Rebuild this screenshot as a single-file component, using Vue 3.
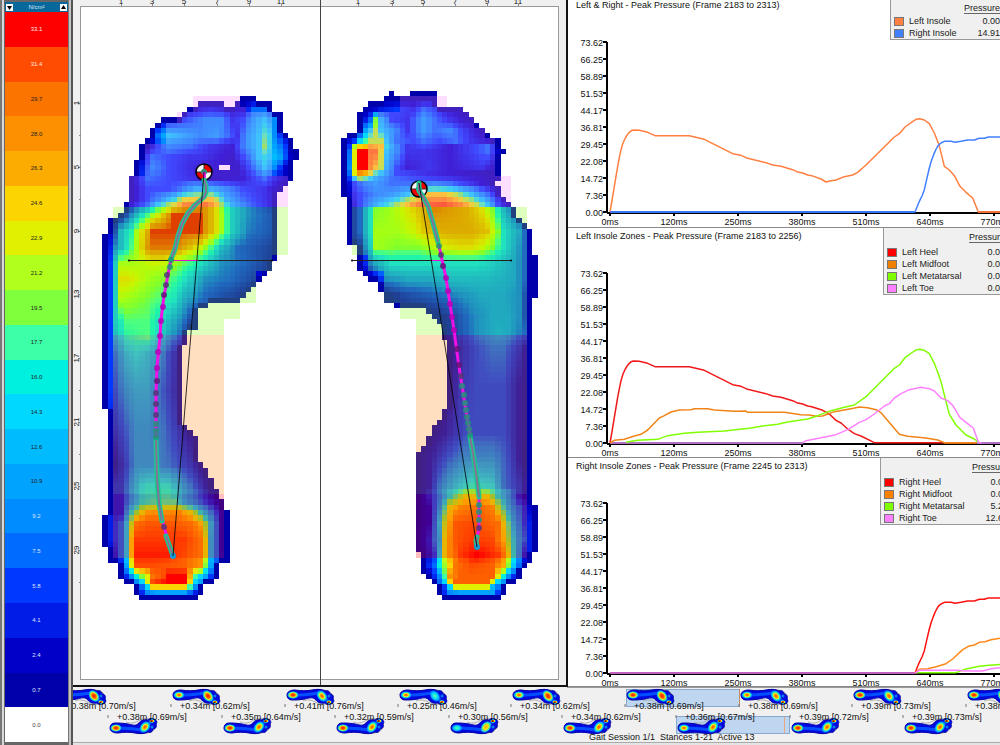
<script setup>
const scale = [
  ['33.1', '#ff0000'], ['31.4', '#ff4c00'], ['29.7', '#fc7400'], ['28.0', '#fc9000'],
  ['26.3', '#fcac00'], ['24.6', '#fcd400'], ['22.9', '#e0f000'], ['21.2', '#b0ff1c'],
  ['19.5', '#80ff3c'], ['17.7', '#3cffa8'], ['16.0', '#00f0e0'], ['14.3', '#00d8ff'],
  ['12.6', '#00bcff'], ['10.9', '#00a4ff'], ['9.2', '#008cff'], ['7.5', '#006cff'],
  ['5.8', '#0038ff'], ['4.1', '#001ce6'], ['2.4', '#0000c8'], ['0.7', '#0000aa'],
  ['0.0', '#ffffff'],
].map(([label, color], i) => ({
  label,
  color,
  ink: i < 2 ? '#ffe8e0' : i < 14 ? '#222' : i < 20 ? '#dfe6ff' : '#444',
}))

// Palette ordered from the lowest loaded level (1) to the highest (20).
const palette = scale.slice(0, 20).reverse().map(({ color }) =>
  [1, 3, 5].map((k) => parseInt(color.slice(k, k + 2), 16)))

const zoneTints = { toe: [255, 128, 255], met: [128, 255, 0], mid: [255, 128, 0], heel: [255, 0, 0] }

function levelColor(v) {
  const p = Math.max(0, Math.min(19, v - 1))
  const i = Math.min(18, Math.floor(p))
  return palette[i].map((c, k) => c + (palette[i + 1][k] - c) * (p - i))
}

function sampleStops(stops, col) {
  if (col <= stops[0][0]) return stops[0][1]
  for (let i = 1; i < stops.length; i++) {
    if (col <= stops[i][0]) {
      const [c0, v0] = stops[i - 1]
      const [c1, v1] = stops[i]
      return v0 + ((v1 - v0) * (col - c0)) / (c1 - c0)
    }
  }
  return stops[stops.length - 1][1]
}

function parseKeys(text) {
  return text.trim().split('\n').map((line) => {
    const [row, rest] = line.trim().split('|')
    return { row: +row, stops: rest.trim().split(' ').map((s) => s.split(':').map(Number)) }
  })
}

// "row|a-b" spans hold until the next listed row.
function parseSpans(text) {
  const out = []
  const items = text.trim().split(/\s+/).map((s) => {
    const [r, span] = s.split('|')
    return { r: +r, ranges: span.split(',').map((x) => x.split('-').map(Number)) }
  })
  items.forEach((it, i) => {
    const end = i + 1 < items.length ? items[i + 1].r : it.r + 1
    for (let r = it.r; r < end; r++) out[r] = it.ranges
  })
  return out
}

const CELL = 5.308

function buildFoot({ x0, y0, shape, zones, bands, keys, holes }) {
  const mask = parseSpans(shape)
  const zone = parseSpans(zones)
  const frames = parseKeys(keys)
  const inside = (r, c) => !!mask[r] && mask[r].some(([a, b]) => c >= a && c < b) &&
    !(holes || []).some(([hr, a, b]) => hr === r && c >= a && c < b)
  const cells = []
  const rows = Math.max(mask.length, zone.length)
  for (let r = 0; r < rows; r++) {
    const band = bands.find((b) => r < b[0])
    let run = null
    for (let c = 0; c < 38; c++) {
      const tinted = band && zone[r] && zone[r].some(([a, b]) => c >= a && c < b)
      const on = inside(r, c)
      let fill = null
      if (on || tinted) {
        let rgb = [255, 255, 255]
        if (on) {
          let v = 1
          const edge = !(inside(r, c - 1) && inside(r, c + 1) && inside(r - 1, c) && inside(r + 1, c))
          if (!edge || (holes || []).some((h) => Math.abs(h[0] - r) < 2 && c >= h[1] - 1 && c <= h[2])) {
            let k = frames.findIndex((f) => f.row >= r)
            if (k < 0) k = frames.length - 1
            const b = frames[k]
            const a = k > 0 && b.row !== r ? frames[k - 1] : b
            const t = a === b ? 0 : (r - a.row) / (b.row - a.row)
            v = sampleStops(a.stops, c) * (1 - t) + sampleStops(b.stops, c) * t
          }
          rgb = levelColor(v)
        }
        if (tinted) rgb = rgb.map((n, k) => n * 0.75 + zoneTints[band[1]][k] * 0.25)
        fill = `rgb(${rgb.map((n) => Math.round(n)).join(',')})`
      }
      if (run && run.fill === fill) { run.c1 = c + 1; continue }
      if (run && run.fill) cells.push(run)
      run = { r, c0: c, c1: c + 1, fill }
    }
    if (run && run.fill) cells.push(run)
  }
  return cells.map(({ r, c0, c1, fill }) => {
    const x = Math.round(x0 + c0 * CELL)
    const y = Math.round(y0 + r * CELL)
    return {
      x, y, fill,
      w: Math.round(x0 + c1 * CELL) - x,
      h: Math.round(y0 + (r + 1) * CELL) - y,
    }
  })
}

const leftCells = buildFoot({
  x0: 102.3, y0: 96,
  shape: `0|26-29 1|18-23,25-32 2|16-32 3|15-34 4|11-34 5|10-34 6|9-34 7|9-35 8|8-36 9|7-36 10|7-37 12|6-36 15|5-36
    16|5-35 17|5-34 18|5-33 20|4-33 22|3-33 23|1-33 26|0-33 31|0-32 33|0-31 34|0-30 35|0-29 36|0-28 37|0-27 38|0-26
    39|0-20 40|0-18 44|0-16 47|0-15 59|1-15 62|1-16 63|1-17 64|1-18 69|1-19 70|1-20 72|1-21 74|1-22 76|1-23 78|1-24
    79|0-24 85|1-24 88|3-22 91|4-21 92|6-19 94|7-18`,
  zones: `0|17-26 2|17-27 3|14-32 5|12-32 9|8-32 15|5-35 21|2-35 30|2-32 33|2-29 39|2-26 42|2-23 86|2-23`,
  bands: [[21, 'toe'], [45, 'met'], [75, 'mid'], [87, 'heel']],
  holes: [[13, 22, 24]],
  keys: `
    0|0:1 36:1
    2|16:2 18:2.5 20:3 24:2 26:2 28:5 30:5 32:2
    4|11:2 13:3 15:4 19:6 22:6 24:3 26:4 28:7 30:9 32:6 33:3
    7|9:2 10:5 12:9 14:8 18:6 21:7 23:5 25:3 27:7 29:9 30:11 31:10 32:6 34:2
    9|8:1 10:4 12:6 16:5 20:3 24:2 27:7 29:9 30:12 31:10 32:7 34:4 35:1
    11|7:2 9:5 12:4 16:3 18:3 24:1.5 27:5 29:9 30:10 31:9 33:7 35:2
    13|7:3 9:6 12:4 15:3 18:2 25:1.5 28:5 30:9 32:6 34:2
    15|5:1 8:5 12:4 16:3 20:1.5 26:2 30:5 32:3 35:1
    17|5:1 8:4 12:4 14:5 17:8 20:8 23:6 26:4 30:3 33:1
    19|5:1 8:4 10:6 13:10 15:14 18:15 20:15 21:13 23:8 26:5 32:2
    20|4:1 8:5 10:9 12:12 15:17 19:18 21:15 22:12 24:8 27:5 32:2
    22|3:1 5:5 7:9 9:13 11:16 13:20 18:20 19:18 21:15 22:13 24:8 27:5 32:3
    25|0:1 2:3 3:7 5:10 6:13 8:17 9:20 18:20 19:18 21:15 22:13 24:8 27:4.5 32:3
    28|0:1 1:3 2:5 4:9 6:13 8:18 9:19 13:19 16:16 18:14 20:11 22:7 25:4 32:2
    31|0:1 1:4 2:8 3:13 5:13 9:14 11:14 14:12 17:10 19:8 22:5 26:4 31:2
    34|0:1 1:4 2:8 3:15 4:15 6:14 8:13 11:12 14:10 17:7 19:5 24:4 29:2
    38|0:1 1:4 2:8 3:13 7:12 10:11 13:9 15:6 18:4 22:2.5 27:1
    42|0:1 1:4 2:8 4:11 8:11 10:9 13:6 15:4 17:1
    45|0:1 1:4 2:7 4:10 8:11 10:9 12:6 14:4 15:2
    48|0:1 1:4 2:5 4:8 6:9 8:8 10:6.5 12:4 14:2
    55|0:1 1:4 2:4 4:6 6:7 8:7 10:5 12:3.5 14:2
    62|0:1 1:3 2:3 4:4.5 6:6 8:6 11:5 13:3.5 15:2 17:1
    69|0:1 1:3 2:1.5 4:3.5 6:6 9:6 12:5 14:4 16:3 18:1.5
    73|1:3 3:3 5:6 7:9 8:9.5 12:9.5 14:7 16:5 18:3 20:1
    76|1:3 3:3 5:7 7:10 10:11 13:11 15:8 17:6 19:4 22:1
    78|1:3 3:3 5:10 7:14 8:15.5 14:16 16:14 18:10 20:6 22:2
    80|0:1 1:3 3:5 4:9 5:13 6:17 8:18 13:18 16:17 18:15 19:12 21:5 22:2
    83|0:1 1:3 3:5 4:9 5:15 6:19 15:19 18:17 19:14 20:8 22:2
    86|0:1 2:3 3:5 4:9 5:15 6:19.5 12:19.5 15:18.5 18:17 19:14 20:8 22:2
    88|3:2 4:7 5:14 6:19 9:19 15:18.5 18:17 19:12 20:7 22:2
    90|3:1 5:6 6:10 7:12 8:14 9:18 11:19 12:20 15:20 16:16 17:11 19:7 21:1
    91|4:1 5:3 7:9 8:14 9:19 12:20 15:20 16:15 17:9 18:7 20:1
    92|6:1 7:5 8:9 9:15 15:15 16:11 17:6 18:1
    93|6:1 8:6 10:7 15:7 17:3 18:1
    94|0:1 36:1`,
})

const rightCells = buildFoot({
  x0: 341.3, y0: 90.7,
  shape: `0|9-10,13-18 1|8-18 2|5-18 3|4-23 4|3-24 5|3-25 6|3-26 7|3-27 8|1-28 9|0-30 11|0-31 12|0-30 17|0-29 18|0-30
    20|1-31 21|1-32 22|1-33 24|1-34 25|1-35 26|1-36 29|3-36 31|3-37 34|4-37 35|5-37 36|7-37 38|8-37 39|8-36 40|10-36
    41|16-36 42|17-36 43|18-36 44|19-36 47|20-36 60|19-36 62|18-36 63|17-36 65|16-36 67|15-36 68|14-36 78|14-37
    87|15-36 89|15-35 90|15-34 91|16-34 92|17-33 93|18-31 95|19-30`,
  zones: `1|11-20 3|11-23 4|7-24 5|7-25 7|5-27 9|5-29 16|2-32 22|2-35 31|5-35 34|8-35 40|11-35 43|14-35 87|14-35`,
  bands: [[22, 'toe'], [46, 'met'], [76, 'mid'], [88, 'heel']],
  keys: `
    1|8:1 17:1
    3|4:1 7:3 10:4 13:3 15:5 17:4 19:2 22:1
    5|3:1 5:5 6:12 7:8 9:4 12:3 15:7 17:5 20:3 24:1
    7|3:1 4:7 5:9 6:13 7:9 9:7 12:3 15:7 17:5 20:6 22:4 26:1
    9|0:1 2:4 3:9 5:13 7:13 8:9 10:5 13:4 15:5 18:4 21:5 24:3 27:2 29:1
    10|0:1 1:4 2:13 3:15 5:16 7:15 8:10 10:6 12:3 15:4 20:2 25:4 27:5 29:2
    11|0:1 1:5 2:14 3:20 4:20 5:18 6:18 7:14 8:9 10:6 12:3 15:3 20:2 25:4 27:5 29:2
    14|0:1 1:6 2:14 3:20 4:20 5:17 6:15 7:13 8:8 10:4 12:2 16:3 20:2 26:3 29:1
    15|0:1 1:5 2:14 3:17 4:16 5:14 6:11 7:9 10:4 14:3 20:2 29:1
    16|0:1 1:4 2:9 3:12 4:11 6:8 9:5 14:4 20:3 29:1
    17|0:1 2:4 4:6 6:7 9:5 14:5 17:6 20:5 24:3 28:1
    19|0:1 3:4 6:6 9:7 12:9 14:13 16:15 19:15 21:13 24:9 27:5 30:1
    21|1:1 3:4 6:8 9:11 12:15 15:18.5 19:19 22:17 25:13 27:9 29:4 31:1
    22|1:1 3:4 5:9 6:12 9:13 11:14 14:16 17:18.5 19:18 23:17 26:15 28:12 30:7 33:2
    26|1:1 3:4 5:9 6:13 10:13 13:14 16:16.5 20:17 24:17 27:16 29:12 30:9 33:6 35:2
    29|3:2 5:8 6:13 10:12 14:12 18:14 22:15 24:15 26:14 28:12 30:9 34:4 35:1
    32|3:2 6:6 9:9 13:9 20:9 25:9 28:8 32:6 34:4 35:1
    35|5:1 8:5 12:6 16:6 20:7 27:7 32:6 34:4 35:1
    38|8:1 11:2.5 16:3.5 20:4.5 26:6 30:6 33:5 35:1
    42|17:1 20:2 24:4.5 28:6 31:6 33:5 35:1
    45|18:1 21:2.5 25:5 29:6.5 31:6 34:4 35:1
    48|19:1 22:2.5 25:4 28:5 30:5 33:3 35:1
    55|19:1 22:3 25:4 30:4 33:2 35:1
    64|16:1 19:2 23:4 30:4 33:2 35:1
    69|14:1 17:2.5 20:4.5 23:6 28:6 31:4 34:1
    74|14:1 16:2 18:5 21:8 24:10 28:9 30:5 33:3 35:1
    76|14:1 16:3 18:6 20:10 23:14 27:14 29:10 31:7 33:3 35:1
    78|14:1 16:2 18:7 20:14 22:16 26:17 28:16 29:13 31:8 33:5 35:2
    81|14:1 16:2 17:5 19:13 21:18 24:18.5 29:17 30:14 32:8 34:4 36:2
    84|14:1 16:3 18:8 19:14 21:18 24:19 28:18.5 30:15 31:12 33:7 35:3 36:1
    87|15:1 17:4 18:9 19:14 20:16 22:19 25:20 29:19 30:17 31:14 32:10 34:3
    89|15:2 17:5 18:10 20:15 21:18 24:19 28:18.5 30:16 31:12 33:5 34:2
    91|16:1 18:6 19:11 20:17 22:18.5 28:18.5 29:14 30:10 31:6 33:1
    92|17:1 18:5 19:9 20:15 21:18.5 27:18.5 28:14 29:9 31:4 32:1
    93|18:1 19:4 20:9 21:14 27:14 28:8 30:3
    94|18:1 20:6 22:7 28:7 30:1
    95|0:1 36:1`,
})

const tracks = [
  {
    path: '204,172 205,184 206,190 204,197 195,205 188,213 182,224 178,236 175,249 170,264 164,296 161,320 160,336 157,368 156,393 156,415 156,443 157,477 159,503 164,527 173,556',
    dense: ['204,180 206,186 206,192 204,197 195,205 188,213 182,224 178,236 175,249 171,259', '156,440 157,477 159,503 162,521', '166,536 173,556'],
    dots: [[171, 260, 0], [170, 267, 0], [167, 275, 1], [166, 285, 1], [164, 295, 2], [163, 307, 3], [161, 321, 3], [160, 336, 3], [158, 352, 3], [157, 368, 3], [157, 381, 2], [156, 393, 1], [156, 404, 1], [156, 415, 1], [156, 424, 0], [156, 431, 0], [156, 437, 0], [164, 527, 1]],
    chord: [204, 172, 173, 556],
    ball: [204, 172],
    axis: [129, 272],
    gap: [171, 198],
    end: [173, 556],
  },
  {
    path: '419,183 419,192 428,206 433,223 439,246 441,255 446,278 450,304 454,330 458,360 463,392 467,417 473,453 477,480 479,497 479,513 479,528 477,538 477,547',
    dense: ['419,183 419,191 422,195 428,206 433,223 438,242', '470,437 473,453 477,480 479,497', '477,537 476,541 477,547'],
    dots: [[439, 246, 0], [441, 255, 1], [443, 266, 2], [446, 278, 3], [448, 291, 3], [450, 304, 3], [452, 317, 3], [454, 330, 3], [457, 349, 2], [459, 365, 2], [461, 376, 1], [462, 386, 0], [464, 395, 0], [465, 403, 0], [466, 410, 0], [467, 417, 0], [468, 423, 0], [469, 429, 0], [470, 435, 0], [479, 505, 0], [479, 512, 0], [479, 520, 0], [479, 528, 1]],
    chord: [419, 183, 477, 547],
    ball: [419, 189],
    axis: [352, 511],
    gap: [432, 443],
    end: [477, 547],
  },
]
const dotInk = ['#159a72', '#4a3a70', '#5a1470', '#b000b4']

const topTicks = [[121, '1'], [152, '3'], [184, '5'], [217, '7'], [249, '9'], [281, '11'],
  [358, '1'], [392, '3'], [423, '5'], [455, '7'], [487, '9'], [518, '11']]
const sideTicks = [[103, '1'], [167, '5'], [231, '9'], [294, '13'], [358, '17'], [422, '21'], [486, '25'], [550, '29']]

// Traces are stored in thirds of a plot pixel: time across, pressure up.
const leftRise = '0,0 6,34 13,77 18,107 23,137 28,163 33,187 39,207 46,222 52,232 58,239 64,244 70,246 88,245 113,239 135,229 238,229 283,218 368,175 393,170 413,161 468,148 488,141 513,137 548,127 560,121 578,117 593,111 605,109'
const rightHeel = '0,0 915,0 928,32 936,48 943,67 950,98 958,132 964,153 971,172 977,186 983,197 988,203 993,207 1003,212 1023,212 1035,209 1053,212 1073,216 1093,216 1108,221 1123,221 1135,225 1180,225'
const charts = [
  {
    title: 'Left & Right - Peak Pressure (Frame 2183 to 2313)',
    base: 212, titleY: 8, cls: 'first',
    items: [['Left Insole', '#ff8040', '0.00'], ['Right Insole', '#4080ff', '14.91']],
    lines: [
      ['#ff7f40', leftRise + ' 633,99 648,90 663,94 678,96 703,106 728,111 743,119 768,141 853,225 868,235 885,255 913,275 921,279 929,280 943,276 958,265 973,237 987,202 1003,137 1018,126 1033,109 1050,77 1068,59 1088,42 1105,0 1180,0'],
      ['#4080ff', rightHeel],
    ],
    zero: [['#1f5fd0', 0, 912], ['#b84a18', 1105, 1180]],
  },
  {
    title: 'Left Insole Zones - Peak Pressure (Frame 2183 to 2256)',
    base: 215, titleY: 11, cls: 'second',
    items: [['Left Heel', '#ff0000', '0.00'], ['Left Midfoot', '#f08000', '0.00'], ['Left Metatarsal', '#80ff00', '0.00'], ['Left Toe', '#ff80ff', '0.00']],
    lines: [
      ['#f01818', leftRise + ' 638,98 658,87 678,68 693,60 713,42 733,28 753,21 793,1 1000,1'],
      ['#f08418', '0,0 13,8 43,11 73,21 93,26 113,39 148,75 163,82 183,93 208,99 243,100 253,103 293,103 313,99 373,95 408,96 413,92 523,92 573,85 598,84 618,80 638,81 673,94 723,103 748,108 773,106 798,100 813,91 868,26 893,20 948,15 983,9 1003,1 1100,1'],
      ['#80ff00', '48,2 83,8 143,11 173,22 223,29 263,32 343,36 423,45 463,52 503,56 533,63 593,72 623,82 663,97 703,107 733,114 768,139 853,224 868,234 885,256 913,276 921,280 929,281 943,278 958,268 973,239 984,210 993,184 1005,136 1018,86 1038,54 1068,24 1093,12 1108,0'],
      ['#ff80ff', '578,1 588,7 633,16 678,25 713,40 748,62 768,70 793,87 823,111 838,118 853,135 873,148 898,160 933,167 958,163 973,156 993,135 1013,127 1028,113 1050,76 1068,62 1090,45 1105,2 1115,0'],
    ],
    zero: [['#b070c8', 0, 580], ['#c86018', 1000, 1100], ['#b070c8', 1100, 1180]],
  },
  {
    title: 'Right Insole Zones - Peak Pressure (Frame 2245 to 2313)',
    base: 215, titleY: 11, cls: 'third',
    items: [['Right Heel', '#ff0000', '0.00'], ['Right Midfoot', '#ff8000', '0.00'], ['Right Metatarsal', '#80ff00', '5.21'], ['Right Toe', '#ff80ff', '12.65']],
    lines: [
      ['#ff1010', rightHeel.replace('0,0 915,0', '915,0')],
      ['#ff8818', '915,0 928,11 953,13 978,19 1008,28 1028,42 1058,70 1075,80 1093,84 1108,92 1125,94 1143,100 1180,106'],
      ['#80ff00', '915,1 1038,1 1068,12 1108,20 1138,23 1180,26'],
      ['#ff80ff', '915,0 928,8 1043,8 1063,6 1118,6 1143,13 1180,17'],
    ],
    zero: [['#c060c0', 0, 915]],
  },
]
const yLabels = ['73.62', '66.25', '58.89', '51.53', '44.17', '36.81', '29.45', '22.08', '14.72', '7.36', '0.00']
const xLabels = ['0ms', '120ms', '250ms', '380ms', '510ms', '640ms', '770ms']

const steps = [
  { x: 58, row: 0, t: '+0.38m [0.70m/s]', heel: 'cool', fore: 'hot' },
  { x: 172, row: 0, t: '+0.34m [0.62m/s]', heel: 'warm', fore: 'hot' },
  { x: 286, row: 0, t: '+0.41m [0.76m/s]', heel: 'hot', fore: 'warm' },
  { x: 399, row: 0, t: '+0.25m [0.46m/s]', heel: 'warm', fore: 'cool' },
  { x: 512, row: 0, t: '+0.34m [0.62m/s]', heel: 'warm', fore: 'hot' },
  { x: 626, row: 0, t: '+0.38m [0.69m/s]', heel: 'hot', fore: 'hot' },
  { x: 740, row: 0, t: '+0.38m [0.69m/s]', heel: 'warm', fore: 'warm' },
  { x: 853, row: 0, t: '+0.39m [0.73m/s]', heel: 'hot', fore: 'warm' },
  { x: 967, row: 0, t: '+0.38m [0.71m/s]', heel: 'hot', fore: 'hot' },
  { x: 109, row: 1, t: '+0.38m [0.69m/s]', heel: 'hot', fore: 'warm' },
  { x: 223, row: 1, t: '+0.35m [0.64m/s]', heel: 'hot', fore: 'warm' },
  { x: 336, row: 1, t: '+0.32m [0.59m/s]', heel: 'hot', fore: 'warm' },
  { x: 450, row: 1, t: '+0.30m [0.56m/s]', heel: 'cool', fore: 'amber' },
  { x: 563, row: 1, t: '+0.34m [0.62m/s]', heel: 'hot', fore: 'warm' },
  { x: 677, row: 1, t: '+0.36m [0.67m/s]', heel: 'warm', fore: 'warm' },
  { x: 791, row: 1, t: '+0.39m [0.72m/s]', heel: 'hot', fore: 'warm' },
  { x: 904, row: 1, t: '+0.39m [0.73m/s]', heel: 'hot', fore: 'warm' },
]
</script>

<template>
  <div class="app">
    <aside class="scale">
      <div class="scale-head">
        <button type="button" aria-label="Lower range"><svg viewBox="0 0 7 7"><path d="M1 2h5L3.500 6z" /></svg></button>
        <span>N/cm²</span>
        <button type="button" aria-label="Raise range"><svg viewBox="0 0 7 7"><path d="M1 5h5L3.500 1z" /></svg></button>
      </div>
      <ul class="scale-list">
        <li v-for="s in scale" :key="s.label" :style="{ background: s.color, color: s.ink }">{{ s.label }}</li>
      </ul>
    </aside>

    <main class="feet">
      <svg viewBox="73 0 493 685" preserveAspectRatio="xMinYMin meet" role="img" aria-label="Peak pressure map of both feet">
        <rect x="73" y="0" width="494" height="687" fill="#f0f0f0" />
        <rect x="80.500" y="6.500" width="478" height="673" fill="#fff" stroke="#999" />
        <g stroke="#888" shape-rendering="crispEdges">
          <line v-for="t in topTicks" :key="'t' + t[0]" :x1="t[0]" :x2="t[0]" y1="4" y2="6" />
          <line v-for="t in sideTicks" :key="'s' + t[0]" x1="78" x2="81" :y1="t[0]" :y2="t[0]" />
          <line v-for="t in sideTicks" :key="'m' + t[0]" x1="79" x2="81" :y1="t[0] + 32" :y2="t[0] + 32" />
        </g>
        <g class="ruler">
          <text v-for="t in topTicks" :key="t[0]" :x="t[0]" y="4" text-anchor="middle">{{ t[1] }}</text>
          <text v-for="t in sideTicks" :key="t[0]" x="0" y="0" text-anchor="middle" :transform="`translate(79 ${t[0]}) rotate(-90)`">{{ t[1] }}</text>
        </g>

        <g shape-rendering="crispEdges">
          <rect v-for="(c, i) in leftCells" :key="'l' + i" :x="c.x" :y="c.y" :width="c.w" :height="c.h" :fill="c.fill" />
          <rect v-for="(c, i) in rightCells" :key="'r' + i" :x="c.x" :y="c.y" :width="c.w" :height="c.h" :fill="c.fill" />
        </g>

        <g v-for="(k, i) in tracks" :key="i" fill="none">
          <g :transform="`translate(${k.ball[0]} ${k.ball[1]})`">
            <circle r="8" fill="#f4f4f4" />
            <path d="M0 0V-8A8 8 0 0 1 8 0ZM0 0V8A8 8 0 0 1-8 0Z" fill="#f00000" />
            <path d="M0-8V8M-8 0H8" stroke="#333" />
            <circle r="8" stroke="#000" stroke-width="1.500" />
            <circle r="3" fill="#2a9070" />
          </g>
          <line :x1="k.axis[0]" :x2="k.axis[1]" y1="260.500" y2="260.500" stroke="#222" />
          <circle :cx="k.axis[0]" cy="260.500" r="1" fill="#000" />
          <circle :cx="k.axis[1]" cy="260.500" r="1" fill="#000" />
          <line :x1="k.gap[0]" :x2="k.gap[1]" y1="260.500" y2="260.500" stroke="#e010d0" />
          <polyline :points="k.path" stroke="#f010e8" stroke-width="3" stroke-linejoin="round" />
          <polyline v-for="(d, j) in k.dense" :key="j" :points="d" stroke="#18c890" stroke-width="5" stroke-linecap="round" stroke-linejoin="round" />
          <polyline v-for="(d, j) in k.dense" :key="'c' + j" :points="d" stroke="#887098" stroke-width="2" />
          <circle v-for="(d, j) in k.dots" :key="'d' + j" :cx="d[0]" :cy="d[1]" r="3" :fill="dotInk[d[2]]" opacity="0.8" />
          <circle :cx="k.end[0]" :cy="k.end[1]" r="3" fill="#1898d0" />
          <line :x1="k.chord[0]" :y1="k.chord[1]" :x2="k.chord[2]" :y2="k.chord[3]" stroke="#000" stroke-opacity="0.8" />
        </g>
        <line x1="320.500" x2="320.500" y1="0" y2="687" stroke="#444" />
      </svg>
    </main>

    <div class="charts">
      <section v-for="c in charts" :key="c.title" class="chart" :class="c.cls">
        <svg viewBox="0 0 432 229" preserveAspectRatio="xMinYMin meet" role="img" :aria-label="c.title">
          <text x="8" :y="c.titleY">{{ c.title }}</text>
          <g :transform="`translate(42 ${c.base})`">
            <path d="M-3-170V0M-3 1H400" stroke="#000" stroke-width="2" fill="none" />
            <g stroke="#000" stroke-width="2">
              <line v-for="(l, i) in yLabels" :key="l" x1="-7" x2="-3" :y1="i * 17 - 170" :y2="i * 17 - 170" />
              <line v-for="(l, i) in xLabels" :key="l" y1="0" y2="4" :x1="i * 64" :x2="i * 64" />
            </g>
            <text v-for="(l, i) in yLabels" :key="l" x="-7" :y="i * 17 - 166" text-anchor="end">{{ l }}</text>
            <text v-for="(l, i) in xLabels" :key="l" :x="i * 64" y="13" text-anchor="middle">{{ l }}</text>
            <line v-for="z in c.zero" :key="z[0] + z[1]" :x1="z[1] / 3" :x2="z[2] / 3" y1="0" y2="0" :stroke="z[0]" stroke-width="2" />
            <g transform="scale(0.333333 -0.333333)">
              <polyline v-for="l in c.lines" :key="l[0]" :points="l[1]" :stroke="l[0]" class="trace" />
            </g>
          </g>
        </svg>
        <div class="legend">
          <table>
            <thead><tr><th class="key"></th><th></th><th class="value"><span>Pressure</span></th></tr></thead>
            <tbody>
              <tr v-for="it in c.items" :key="it[0]">
                <td class="key"><i :style="{ background: it[1] }"></i></td>
                <td>{{ it[0] }}</td>
                <td class="value">{{ it[2] }}</td>
              </tr>
            </tbody>
          </table>
        </div>
      </section>
    </div>

    <footer class="timeline">
      <svg viewBox="73 687 927 58" preserveAspectRatio="xMinYMin meet" role="img" aria-label="Gait session timeline">
        <defs>
          <radialGradient id="hot">
            <stop offset="0" stop-color="#ff1000" /><stop offset="0.35" stop-color="#ff6000" /><stop offset="0.55" stop-color="#f8e010" />
            <stop offset="0.7" stop-color="#30f0a0" /><stop offset="0.85" stop-color="#0090ff" /><stop offset="1" stop-color="#0030ff" stop-opacity="0" />
          </radialGradient>
          <radialGradient id="warm">
            <stop offset="0" stop-color="#ff5000" /><stop offset="0.25" stop-color="#ff9000" /><stop offset="0.45" stop-color="#e8f020" />
            <stop offset="0.6" stop-color="#20f0c0" /><stop offset="0.8" stop-color="#0090ff" /><stop offset="1" stop-color="#0030ff" stop-opacity="0" />
          </radialGradient>
          <radialGradient id="amber">
            <stop offset="0" stop-color="#ffb000" /><stop offset="0.4" stop-color="#f8e010" />
            <stop offset="0.7" stop-color="#20f0c0" /><stop offset="1" stop-color="#0070ff" stop-opacity="0" />
          </radialGradient>
          <radialGradient id="cool">
            <stop offset="0" stop-color="#60ffa0" /><stop offset="0.4" stop-color="#10e8f0" />
            <stop offset="0.7" stop-color="#00a0ff" /><stop offset="1" stop-color="#0040ff" stop-opacity="0" />
          </radialGradient>
        </defs>
        <rect x="73" y="687" width="927" height="58" fill="#f0f0f0" />
        <path d="M567 687.500H1000" stroke="#999" />
        <path d="M73 742.500H1000" stroke="#aaa" />
        <rect x="73" y="743" width="927" height="2" fill="#e4e4e4" />
        <rect x="626.500" y="689.500" width="113" height="17" fill="#bed6f0" stroke="#88a8d0" />
        <path d="M739.500 689V706" stroke="#c88860" />
        <rect x="676.500" y="716.500" width="113" height="17" fill="#bed6f0" stroke="#88a8d0" />
        <path d="M784.500 717V733" stroke="#e8a880" />
        <g v-for="s in steps" :key="s.x">
          <g :transform="s.row ? `translate(${s.x + 1} 734) scale(1 -1)` : `translate(${s.x + 1} 689)`">
            <path d="M16 12C20 10 25 11 28 13C33 16 38 16 42 15M30 1C38 0 44 2 46 7" fill="none" stroke="#aaa" />
            <path d="M0 6C0 3 3 1 8 1C14 2 20 2 25 1C29 0 35 0 38 2C40 1 43 2 43 5C46 5 47 8 46 10C48 12 46 15 43 15C41 16 39 15 38 14C33 15 30 13 28 10C25 8 22 9 18 10C12 11 9 11 5 11C2 11 0 9 0 6Z" fill="#0008e0" stroke="#0000a8" />
            <path d="M9 6C18 6 24 5 32 4L36 8L40 11" fill="none" stroke="#0050ff" stroke-width="3" stroke-linecap="round" stroke-linejoin="round" />
            <ellipse cx="6" cy="6" rx="6" ry="4" :fill="`url(#${s.heel})`" />
            <ellipse cx="35" cy="7" rx="7" ry="5" transform="rotate(50 35 7)" :fill="`url(#${s.fore})`" />
            <ellipse cx="42" cy="13" rx="3" ry="2" fill="url(#hot)" />
            <circle cx="42" cy="7" r="1.500" fill="#00a0f0" opacity="0.8" />
          </g>
          <line :x1="s.x - 1" :x2="s.x - 1" :y1="s.row ? 715 : 704" :y2="s.row ? 718 : 707" stroke="#777" />
          <text :x="s.x + 8" :y="s.row ? 720 : 709">{{ s.t }}</text>
        </g>
        <text x="589" y="740" class="session">Gait Session 1/1&nbsp; Stances 1-21&nbsp; Active 13</text>
      </svg>
    </footer>
  </div>
</template>

<style>
body { margin: 0; background: #f0f0f0; }
</style>

<style scoped>
.app {
  display: grid;
  grid-template-columns: 73px minmax(0, 495fr) minmax(0, 432fr);
  grid-template-rows: minmax(0, 1fr) 58px;
  height: 100vh;
  overflow: hidden;
  font-family: "Liberation Sans", Arial, sans-serif;
  font-size: 9px;
  color: #222;
}
svg { display: block; width: 100%; height: 100%; }
svg text { fill: #111; font-size: 9px; }

.scale {
  grid-row: 1 / 3;
  display: flex;
  flex-direction: column;
  box-sizing: border-box;
  padding: 2px 4px 3px 5px;
  background: linear-gradient(90deg, #777 0 2px, #d8d8d8 2px 4px, #666 4px 68px, #777 68px 69px, #c4c4c4 69px 71px, #555 71px 73px);
}
.scale-head {
  display: flex;
  align-items: center;
  justify-content: space-between;
  box-sizing: border-box;
  height: 10px;
  padding: 0 1px;
  margin-right: 1px;
  background: #08689c;
  color: #d8ecf8;
  font-size: 6px;
}
.scale-head button {
  width: 7px;
  height: 7px;
  padding: 0;
  border: 0;
  background: #fff;
}
.scale-list {
  flex: 1;
  display: flex;
  flex-direction: column;
  margin: 0 1px 0 0;
  padding: 0;
  list-style: none;
  font-size: 6px;
}
.scale-list li {
  flex: 1;
  display: flex;
  align-items: center;
  justify-content: center;
}

.feet {
  border-right: 2px solid #111;
  border-bottom: 2px solid #111;
  min-height: 0;
  overflow: hidden;
  background: #f0f0f0;
}
.ruler text { font-size: 8px; }

.charts {
  display: grid;
  grid-template-rows: 228fr 230fr 229fr;
  min-height: 0;
  background: #fff;
}
.chart {
  position: relative;
  min-height: 0;
  overflow: hidden;
  border-bottom: 1px solid #888;
  box-sizing: border-box;
}
.chart svg { overflow: visible; height: auto; }
.trace {
  fill: none;
  stroke-width: 1.5px;
  stroke-linejoin: round;
  vector-effect: non-scaling-stroke;
}
.legend {
  position: absolute;
  top: 0;
  right: 0;
  overflow: hidden;
  box-sizing: border-box;
  border-left: 1px solid #999;
  border-bottom: 1px solid #999;
  background: #f0f0f0;
}
.legend table {
  border-collapse: collapse;
  table-layout: fixed;
  white-space: nowrap;
}
.legend th, .legend td {
  height: 12px;
  padding: 0;
  line-height: 12px;
  font-weight: normal;
  text-align: left;
}
.legend th { height: 18px; vertical-align: middle; }
.legend th span { border-bottom: 1px solid #666; }
.legend .key { width: 18px; }
.legend .key i {
  display: block;
  width: 8px;
  height: 7px;
  margin-left: 3px;
  border: 1px solid #777;
}
.legend .value { width: 36px; text-align: right; }
.first .legend { width: 110px; }
.first .legend table { width: 109px; }
.first .legend th { height: 15px; }
.second .legend { width: 117px; }
.second .legend table { width: 121px; }
.third .legend { width: 120px; }
.third .legend table { width: 127px; }

.timeline { grid-column: 2 / 4; min-height: 0; overflow: hidden; }
</style>
